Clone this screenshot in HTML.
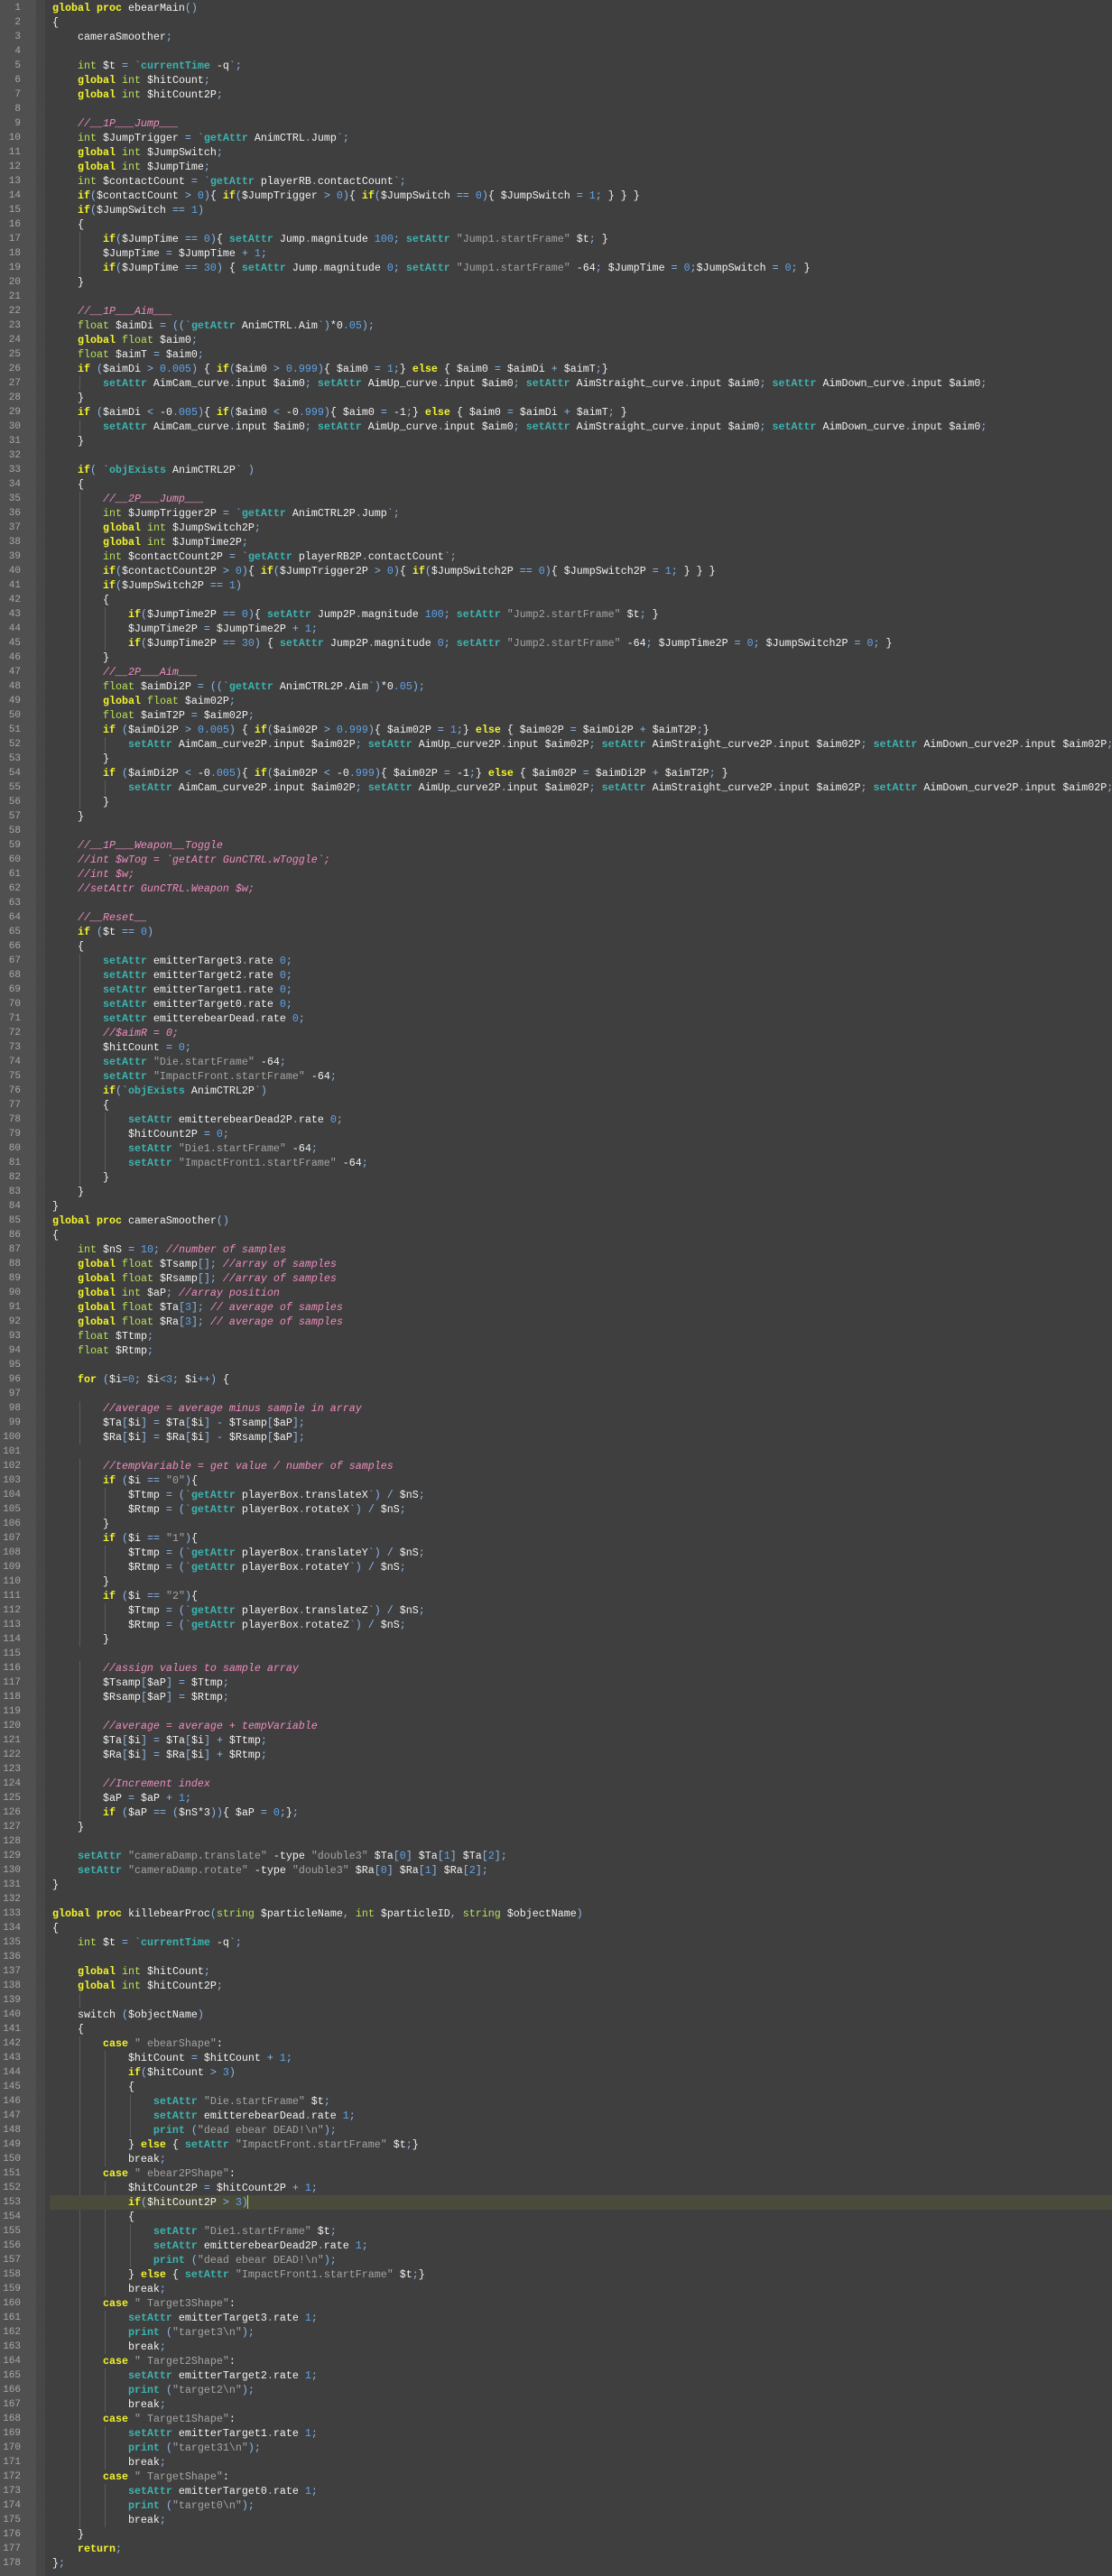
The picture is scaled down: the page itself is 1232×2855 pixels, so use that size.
<!DOCTYPE html>
<html><head><meta charset="utf-8"><style>
html,body{margin:0;padding:0;}
body{width:1232px;height:2855px;overflow:hidden;background:#3f3f3f;position:relative;font-family:"Liberation Mono",monospace;font-size:11.67px;}
#gut{position:absolute;left:0;top:0;width:40px;height:2855px;background:#505050;}
#strip{position:absolute;left:40px;top:0;width:10px;height:2855px;background:repeating-linear-gradient(45deg,#4a4a4a 0 1px,#444 1px 2px);}
#nums{position:absolute;left:0;top:1px;width:23px;text-align:right;color:#a8a8a8;line-height:16px;white-space:pre;font-size:11px;}
#hl{position:absolute;left:55px;top:2433px;width:1177px;height:16px;background:#4b4b3b;}
#code{position:absolute;left:0;top:1px;width:1232px;}
.l{height:16px;line-height:16px;white-space:pre;color:#f2f2f2;padding-left:58px;}
.g1{background:linear-gradient(#5c5c5c,#5c5c5c) no-repeat 88px 0/1px 16px;}
.g2{background:linear-gradient(#5c5c5c,#5c5c5c) no-repeat 88px 0/1px 16px,linear-gradient(#5c5c5c,#5c5c5c) no-repeat 116px 0/1px 16px;}
.g3{background:linear-gradient(#5c5c5c,#5c5c5c) no-repeat 88px 0/1px 16px,linear-gradient(#5c5c5c,#5c5c5c) no-repeat 116px 0/1px 16px,linear-gradient(#5c5c5c,#5c5c5c) no-repeat 144px 0/1px 16px;}
k{color:#f4f42c;font-weight:bold;}
t{color:#b8e05a;}
f{color:#3cb4b0;font-weight:bold;}
n{color:#5ca4ec;}
v{color:#a4a4a4;}
c{color:#f08cc0;font-style:italic;}
o{color:#8cb8e8;}
#cur{position:absolute;left:274px;top:2433px;width:1px;height:15px;background:#b0e040;}
</style></head><body>
<div id="gut"></div><div id="strip"></div><div id="hl"></div>
<div id="nums">1
2
3
4
5
6
7
8
9
10
11
12
13
14
15
16
17
18
19
20
21
22
23
24
25
26
27
28
29
30
31
32
33
34
35
36
37
38
39
40
41
42
43
44
45
46
47
48
49
50
51
52
53
54
55
56
57
58
59
60
61
62
63
64
65
66
67
68
69
70
71
72
73
74
75
76
77
78
79
80
81
82
83
84
85
86
87
88
89
90
91
92
93
94
95
96
97
98
99
100
101
102
103
104
105
106
107
108
109
110
111
112
113
114
115
116
117
118
119
120
121
122
123
124
125
126
127
128
129
130
131
132
133
134
135
136
137
138
139
140
141
142
143
144
145
146
147
148
149
150
151
152
153
154
155
156
157
158
159
160
161
162
163
164
165
166
167
168
169
170
171
172
173
174
175
176
177
178</div>
<div id="code">
<div class="l"><k>global</k> <k>proc</k> ebearMain<o>()</o></div>
<div class="l">{</div>
<div class="l">    cameraSmoother<o>;</o></div>
<div class="l"></div>
<div class="l">    <t>int</t> $t <o>=</o> <o>`</o><f>currentTime</f> -q<o>`;</o></div>
<div class="l">    <k>global</k> <t>int</t> $hitCount<o>;</o></div>
<div class="l">    <k>global</k> <t>int</t> $hitCount2P<o>;</o></div>
<div class="l"></div>
<div class="l">    <c>//__1P___Jump___</c></div>
<div class="l">    <t>int</t> $JumpTrigger <o>=</o> <o>`</o><f>getAttr</f> AnimCTRL<o>.</o>Jump<o>`;</o></div>
<div class="l">    <k>global</k> <t>int</t> $JumpSwitch<o>;</o></div>
<div class="l">    <k>global</k> <t>int</t> $JumpTime<o>;</o></div>
<div class="l">    <t>int</t> $contactCount <o>=</o> <o>`</o><f>getAttr</f> playerRB<o>.</o>contactCount<o>`;</o></div>
<div class="l">    <k>if</k><o>(</o>$contactCount <o>&gt;</o> <n>0</n><o>)</o>{ <k>if</k><o>(</o>$JumpTrigger <o>&gt;</o> <n>0</n><o>)</o>{ <k>if</k><o>(</o>$JumpSwitch <o>==</o> <n>0</n><o>)</o>{ $JumpSwitch <o>=</o> <n>1</n><o>;</o> } } }</div>
<div class="l">    <k>if</k><o>(</o>$JumpSwitch <o>==</o> <n>1</n><o>)</o></div>
<div class="l">    {</div>
<div class="l g1">        <k>if</k><o>(</o>$JumpTime <o>==</o> <n>0</n><o>)</o>{ <f>setAttr</f> Jump<o>.</o>magnitude <n>100</n><o>;</o> <f>setAttr</f> <v>"Jump1.startFrame"</v> $t<o>;</o> }</div>
<div class="l g1">        $JumpTime <o>=</o> $JumpTime <o>+</o> <n>1</n><o>;</o></div>
<div class="l g1">        <k>if</k><o>(</o>$JumpTime <o>==</o> <n>30</n><o>)</o> { <f>setAttr</f> Jump<o>.</o>magnitude <n>0</n><o>;</o> <f>setAttr</f> <v>"Jump1.startFrame"</v> -64<o>;</o> $JumpTime <o>=</o> <n>0</n><o>;</o>$JumpSwitch <o>=</o> <n>0</n><o>;</o> }</div>
<div class="l">    }</div>
<div class="l"></div>
<div class="l">    <c>//__1P___Aim___</c></div>
<div class="l">    <t>float</t> $aimDi <o>=</o> <o>((`</o><f>getAttr</f> AnimCTRL<o>.</o>Aim<o>`)</o>*0<n>.05</n><o>);</o></div>
<div class="l">    <k>global</k> <t>float</t> $aim0<o>;</o></div>
<div class="l">    <t>float</t> $aimT <o>=</o> $aim0<o>;</o></div>
<div class="l">    <k>if</k> <o>(</o>$aimDi <o>&gt;</o> <n>0.005</n><o>)</o> { <k>if</k><o>(</o>$aim0 <o>&gt;</o> <n>0.999</n><o>)</o>{ $aim0 <o>=</o> <n>1</n><o>;</o>} <k>else</k> { $aim0 <o>=</o> $aimDi <o>+</o> $aimT<o>;</o>}</div>
<div class="l g1">        <f>setAttr</f> AimCam_curve<o>.</o>input $aim0<o>;</o> <f>setAttr</f> AimUp_curve<o>.</o>input $aim0<o>;</o> <f>setAttr</f> AimStraight_curve<o>.</o>input $aim0<o>;</o> <f>setAttr</f> AimDown_curve<o>.</o>input $aim0<o>;</o></div>
<div class="l">    }</div>
<div class="l">    <k>if</k> <o>(</o>$aimDi <o>&lt;</o> -0<n>.005</n><o>)</o>{ <k>if</k><o>(</o>$aim0 <o>&lt;</o> -0<n>.999</n><o>)</o>{ $aim0 <o>=</o> -1<o>;</o>} <k>else</k> { $aim0 <o>=</o> $aimDi <o>+</o> $aimT<o>;</o> }</div>
<div class="l g1">        <f>setAttr</f> AimCam_curve<o>.</o>input $aim0<o>;</o> <f>setAttr</f> AimUp_curve<o>.</o>input $aim0<o>;</o> <f>setAttr</f> AimStraight_curve<o>.</o>input $aim0<o>;</o> <f>setAttr</f> AimDown_curve<o>.</o>input $aim0<o>;</o></div>
<div class="l">    }</div>
<div class="l"></div>
<div class="l">    <k>if</k><o>(</o> <o>`</o><f>objExists</f> AnimCTRL2P<o>`</o> <o>)</o></div>
<div class="l">    {</div>
<div class="l g1">        <c>//__2P___Jump___</c></div>
<div class="l g1">        <t>int</t> $JumpTrigger2P <o>=</o> <o>`</o><f>getAttr</f> AnimCTRL2P<o>.</o>Jump<o>`;</o></div>
<div class="l g1">        <k>global</k> <t>int</t> $JumpSwitch2P<o>;</o></div>
<div class="l g1">        <k>global</k> <t>int</t> $JumpTime2P<o>;</o></div>
<div class="l g1">        <t>int</t> $contactCount2P <o>=</o> <o>`</o><f>getAttr</f> playerRB2P<o>.</o>contactCount<o>`;</o></div>
<div class="l g1">        <k>if</k><o>(</o>$contactCount2P <o>&gt;</o> <n>0</n><o>)</o>{ <k>if</k><o>(</o>$JumpTrigger2P <o>&gt;</o> <n>0</n><o>)</o>{ <k>if</k><o>(</o>$JumpSwitch2P <o>==</o> <n>0</n><o>)</o>{ $JumpSwitch2P <o>=</o> <n>1</n><o>;</o> } } }</div>
<div class="l g1">        <k>if</k><o>(</o>$JumpSwitch2P <o>==</o> <n>1</n><o>)</o></div>
<div class="l g1">        {</div>
<div class="l g2">            <k>if</k><o>(</o>$JumpTime2P <o>==</o> <n>0</n><o>)</o>{ <f>setAttr</f> Jump2P<o>.</o>magnitude <n>100</n><o>;</o> <f>setAttr</f> <v>"Jump2.startFrame"</v> $t<o>;</o> }</div>
<div class="l g2">            $JumpTime2P <o>=</o> $JumpTime2P <o>+</o> <n>1</n><o>;</o></div>
<div class="l g2">            <k>if</k><o>(</o>$JumpTime2P <o>==</o> <n>30</n><o>)</o> { <f>setAttr</f> Jump2P<o>.</o>magnitude <n>0</n><o>;</o> <f>setAttr</f> <v>"Jump2.startFrame"</v> -64<o>;</o> $JumpTime2P <o>=</o> <n>0</n><o>;</o> $JumpSwitch2P <o>=</o> <n>0</n><o>;</o> }</div>
<div class="l g1">        }</div>
<div class="l g1">        <c>//__2P___Aim___</c></div>
<div class="l g1">        <t>float</t> $aimDi2P <o>=</o> <o>((`</o><f>getAttr</f> AnimCTRL2P<o>.</o>Aim<o>`)</o>*0<n>.05</n><o>);</o></div>
<div class="l g1">        <k>global</k> <t>float</t> $aim02P<o>;</o></div>
<div class="l g1">        <t>float</t> $aimT2P <o>=</o> $aim02P<o>;</o></div>
<div class="l g1">        <k>if</k> <o>(</o>$aimDi2P <o>&gt;</o> <n>0.005</n><o>)</o> { <k>if</k><o>(</o>$aim02P <o>&gt;</o> <n>0.999</n><o>)</o>{ $aim02P <o>=</o> <n>1</n><o>;</o>} <k>else</k> { $aim02P <o>=</o> $aimDi2P <o>+</o> $aimT2P<o>;</o>}</div>
<div class="l g2">            <f>setAttr</f> AimCam_curve2P<o>.</o>input $aim02P<o>;</o> <f>setAttr</f> AimUp_curve2P<o>.</o>input $aim02P<o>;</o> <f>setAttr</f> AimStraight_curve2P<o>.</o>input $aim02P<o>;</o> <f>setAttr</f> AimDown_curve2P<o>.</o>input $aim02P<o>;</o></div>
<div class="l g1">        }</div>
<div class="l g1">        <k>if</k> <o>(</o>$aimDi2P <o>&lt;</o> -0<n>.005</n><o>)</o>{ <k>if</k><o>(</o>$aim02P <o>&lt;</o> -0<n>.999</n><o>)</o>{ $aim02P <o>=</o> -1<o>;</o>} <k>else</k> { $aim02P <o>=</o> $aimDi2P <o>+</o> $aimT2P<o>;</o> }</div>
<div class="l g2">            <f>setAttr</f> AimCam_curve2P<o>.</o>input $aim02P<o>;</o> <f>setAttr</f> AimUp_curve2P<o>.</o>input $aim02P<o>;</o> <f>setAttr</f> AimStraight_curve2P<o>.</o>input $aim02P<o>;</o> <f>setAttr</f> AimDown_curve2P<o>.</o>input $aim02P<o>;</o></div>
<div class="l g1">        }</div>
<div class="l">    }</div>
<div class="l"></div>
<div class="l">    <c>//__1P___Weapon__Toggle</c></div>
<div class="l">    <c>//int $wTog = `getAttr GunCTRL.wToggle`;</c></div>
<div class="l">    <c>//int $w;</c></div>
<div class="l">    <c>//setAttr GunCTRL.Weapon $w;</c></div>
<div class="l"></div>
<div class="l">    <c>//__Reset__</c></div>
<div class="l">    <k>if</k> <o>(</o>$t <o>==</o> <n>0</n><o>)</o></div>
<div class="l">    {</div>
<div class="l g1">        <f>setAttr</f> emitterTarget3<o>.</o>rate <n>0</n><o>;</o></div>
<div class="l g1">        <f>setAttr</f> emitterTarget2<o>.</o>rate <n>0</n><o>;</o></div>
<div class="l g1">        <f>setAttr</f> emitterTarget1<o>.</o>rate <n>0</n><o>;</o></div>
<div class="l g1">        <f>setAttr</f> emitterTarget0<o>.</o>rate <n>0</n><o>;</o></div>
<div class="l g1">        <f>setAttr</f> emitterebearDead<o>.</o>rate <n>0</n><o>;</o></div>
<div class="l g1">        <c>//$aimR = 0;</c></div>
<div class="l g1">        $hitCount <o>=</o> <n>0</n><o>;</o></div>
<div class="l g1">        <f>setAttr</f> <v>"Die.startFrame"</v> -64<o>;</o></div>
<div class="l g1">        <f>setAttr</f> <v>"ImpactFront.startFrame"</v> -64<o>;</o></div>
<div class="l g1">        <k>if</k><o>(`</o><f>objExists</f> AnimCTRL2P<o>`)</o></div>
<div class="l g1">        {</div>
<div class="l g2">            <f>setAttr</f> emitterebearDead2P<o>.</o>rate <n>0</n><o>;</o></div>
<div class="l g2">            $hitCount2P <o>=</o> <n>0</n><o>;</o></div>
<div class="l g2">            <f>setAttr</f> <v>"Die1.startFrame"</v> -64<o>;</o></div>
<div class="l g2">            <f>setAttr</f> <v>"ImpactFront1.startFrame"</v> -64<o>;</o></div>
<div class="l g1">        }</div>
<div class="l">    }</div>
<div class="l">}</div>
<div class="l"><k>global</k> <k>proc</k> cameraSmoother<o>()</o></div>
<div class="l">{</div>
<div class="l">    <t>int</t> $nS <o>=</o> <n>10</n><o>;</o> <c>//number of samples</c></div>
<div class="l">    <k>global</k> <t>float</t> $Tsamp<o>[];</o> <c>//array of samples</c></div>
<div class="l">    <k>global</k> <t>float</t> $Rsamp<o>[];</o> <c>//array of samples</c></div>
<div class="l">    <k>global</k> <t>int</t> $aP<o>;</o> <c>//array position</c></div>
<div class="l">    <k>global</k> <t>float</t> $Ta<o>[</o><n>3</n><o>];</o> <c>// average of samples</c></div>
<div class="l">    <k>global</k> <t>float</t> $Ra<o>[</o><n>3</n><o>];</o> <c>// average of samples</c></div>
<div class="l">    <t>float</t> $Ttmp<o>;</o></div>
<div class="l">    <t>float</t> $Rtmp<o>;</o></div>
<div class="l"></div>
<div class="l">    <k>for</k> <o>(</o>$i<o>=</o><n>0</n><o>;</o> $i<o>&lt;</o><n>3</n><o>;</o> $i<o>++)</o> {</div>
<div class="l"></div>
<div class="l g1">        <c>//average = average minus sample in array</c></div>
<div class="l g1">        $Ta<o>[</o>$i<o>]</o> <o>=</o> $Ta<o>[</o>$i<o>]</o> <o>-</o> $Tsamp<o>[</o>$aP<o>];</o></div>
<div class="l g1">        $Ra<o>[</o>$i<o>]</o> <o>=</o> $Ra<o>[</o>$i<o>]</o> <o>-</o> $Rsamp<o>[</o>$aP<o>];</o></div>
<div class="l"></div>
<div class="l g1">        <c>//tempVariable = get value / number of samples</c></div>
<div class="l g1">        <k>if</k> <o>(</o>$i <o>==</o> <v>"0"</v><o>)</o>{</div>
<div class="l g2">            $Ttmp <o>=</o> <o>(`</o><f>getAttr</f> playerBox<o>.</o>translateX<o>`)</o> <o>/</o> $nS<o>;</o></div>
<div class="l g2">            $Rtmp <o>=</o> <o>(`</o><f>getAttr</f> playerBox<o>.</o>rotateX<o>`)</o> <o>/</o> $nS<o>;</o></div>
<div class="l g1">        }</div>
<div class="l g1">        <k>if</k> <o>(</o>$i <o>==</o> <v>"1"</v><o>)</o>{</div>
<div class="l g2">            $Ttmp <o>=</o> <o>(`</o><f>getAttr</f> playerBox<o>.</o>translateY<o>`)</o> <o>/</o> $nS<o>;</o></div>
<div class="l g2">            $Rtmp <o>=</o> <o>(`</o><f>getAttr</f> playerBox<o>.</o>rotateY<o>`)</o> <o>/</o> $nS<o>;</o></div>
<div class="l g1">        }</div>
<div class="l g1">        <k>if</k> <o>(</o>$i <o>==</o> <v>"2"</v><o>)</o>{</div>
<div class="l g2">            $Ttmp <o>=</o> <o>(`</o><f>getAttr</f> playerBox<o>.</o>translateZ<o>`)</o> <o>/</o> $nS<o>;</o></div>
<div class="l g2">            $Rtmp <o>=</o> <o>(`</o><f>getAttr</f> playerBox<o>.</o>rotateZ<o>`)</o> <o>/</o> $nS<o>;</o></div>
<div class="l g1">        }</div>
<div class="l"></div>
<div class="l g1">        <c>//assign values to sample array</c></div>
<div class="l g1">        $Tsamp<o>[</o>$aP<o>]</o> <o>=</o> $Ttmp<o>;</o></div>
<div class="l g1">        $Rsamp<o>[</o>$aP<o>]</o> <o>=</o> $Rtmp<o>;</o></div>
<div class="l g1"></div>
<div class="l g1">        <c>//average = average + tempVariable</c></div>
<div class="l g1">        $Ta<o>[</o>$i<o>]</o> <o>=</o> $Ta<o>[</o>$i<o>]</o> <o>+</o> $Ttmp<o>;</o></div>
<div class="l g1">        $Ra<o>[</o>$i<o>]</o> <o>=</o> $Ra<o>[</o>$i<o>]</o> <o>+</o> $Rtmp<o>;</o></div>
<div class="l g1"></div>
<div class="l g1">        <c>//Increment index</c></div>
<div class="l g1">        $aP <o>=</o> $aP <o>+</o> <n>1</n><o>;</o></div>
<div class="l g1">        <k>if</k> <o>(</o>$aP <o>==</o> <o>(</o>$nS*3<o>))</o>{ $aP <o>=</o> <n>0</n><o>;</o>}<o>;</o></div>
<div class="l">    }</div>
<div class="l"></div>
<div class="l">    <f>setAttr</f> <v>"cameraDamp.translate"</v> -type <v>"double3"</v> $Ta<o>[</o><n>0</n><o>]</o> $Ta<o>[</o><n>1</n><o>]</o> $Ta<o>[</o><n>2</n><o>];</o></div>
<div class="l">    <f>setAttr</f> <v>"cameraDamp.rotate"</v> -type <v>"double3"</v> $Ra<o>[</o><n>0</n><o>]</o> $Ra<o>[</o><n>1</n><o>]</o> $Ra<o>[</o><n>2</n><o>];</o></div>
<div class="l">}</div>
<div class="l"></div>
<div class="l"><k>global</k> <k>proc</k> killebearProc<o>(</o><t>string</t> $particleName<o>,</o> <t>int</t> $particleID<o>,</o> <t>string</t> $objectName<o>)</o></div>
<div class="l">{</div>
<div class="l">    <t>int</t> $t <o>=</o> <o>`</o><f>currentTime</f> -q<o>`;</o></div>
<div class="l"></div>
<div class="l">    <k>global</k> <t>int</t> $hitCount<o>;</o></div>
<div class="l">    <k>global</k> <t>int</t> $hitCount2P<o>;</o></div>
<div class="l g1"></div>
<div class="l">    switch <o>(</o>$objectName<o>)</o></div>
<div class="l">    {</div>
<div class="l g1">        <k>case</k> <v>" ebearShape"</v>:</div>
<div class="l g2">            $hitCount <o>=</o> $hitCount <o>+</o> <n>1</n><o>;</o></div>
<div class="l g2">            <k>if</k><o>(</o>$hitCount <o>&gt;</o> <n>3</n><o>)</o></div>
<div class="l g2">            {</div>
<div class="l g3">                <f>setAttr</f> <v>"Die.startFrame"</v> $t<o>;</o></div>
<div class="l g3">                <f>setAttr</f> emitterebearDead<o>.</o>rate <n>1</n><o>;</o></div>
<div class="l g3">                <f>print</f> <o>(</o><v>"dead ebear DEAD!\n"</v><o>);</o></div>
<div class="l g2">            } <k>else</k> { <f>setAttr</f> <v>"ImpactFront.startFrame"</v> $t<o>;</o>}</div>
<div class="l g2">            break<o>;</o></div>
<div class="l g1">        <k>case</k> <v>" ebear2PShape"</v>:</div>
<div class="l g2">            $hitCount2P <o>=</o> $hitCount2P <o>+</o> <n>1</n><o>;</o></div>
<div class="l">            <k>if</k><o>(</o>$hitCount2P <o>&gt;</o> <n>3</n><o>)</o></div>
<div class="l g2">            {</div>
<div class="l g3">                <f>setAttr</f> <v>"Die1.startFrame"</v> $t<o>;</o></div>
<div class="l g3">                <f>setAttr</f> emitterebearDead2P<o>.</o>rate <n>1</n><o>;</o></div>
<div class="l g3">                <f>print</f> <o>(</o><v>"dead ebear DEAD!\n"</v><o>);</o></div>
<div class="l g2">            } <k>else</k> { <f>setAttr</f> <v>"ImpactFront1.startFrame"</v> $t<o>;</o>}</div>
<div class="l g2">            break<o>;</o></div>
<div class="l g1">        <k>case</k> <v>" Target3Shape"</v>:</div>
<div class="l g2">            <f>setAttr</f> emitterTarget3<o>.</o>rate <n>1</n><o>;</o></div>
<div class="l g2">            <f>print</f> <o>(</o><v>"target3\n"</v><o>);</o></div>
<div class="l g2">            break<o>;</o></div>
<div class="l g1">        <k>case</k> <v>" Target2Shape"</v>:</div>
<div class="l g2">            <f>setAttr</f> emitterTarget2<o>.</o>rate <n>1</n><o>;</o></div>
<div class="l g2">            <f>print</f> <o>(</o><v>"target2\n"</v><o>);</o></div>
<div class="l g2">            break<o>;</o></div>
<div class="l g1">        <k>case</k> <v>" Target1Shape"</v>:</div>
<div class="l g2">            <f>setAttr</f> emitterTarget1<o>.</o>rate <n>1</n><o>;</o></div>
<div class="l g2">            <f>print</f> <o>(</o><v>"target31\n"</v><o>);</o></div>
<div class="l g2">            break<o>;</o></div>
<div class="l g1">        <k>case</k> <v>" TargetShape"</v>:</div>
<div class="l g2">            <f>setAttr</f> emitterTarget0<o>.</o>rate <n>1</n><o>;</o></div>
<div class="l g2">            <f>print</f> <o>(</o><v>"target0\n"</v><o>);</o></div>
<div class="l g2">            break<o>;</o></div>
<div class="l">    }</div>
<div class="l">    <k>return</k><o>;</o></div>
<div class="l">}<o>;</o></div>
</div>
<div id="cur"></div>
</body></html>
